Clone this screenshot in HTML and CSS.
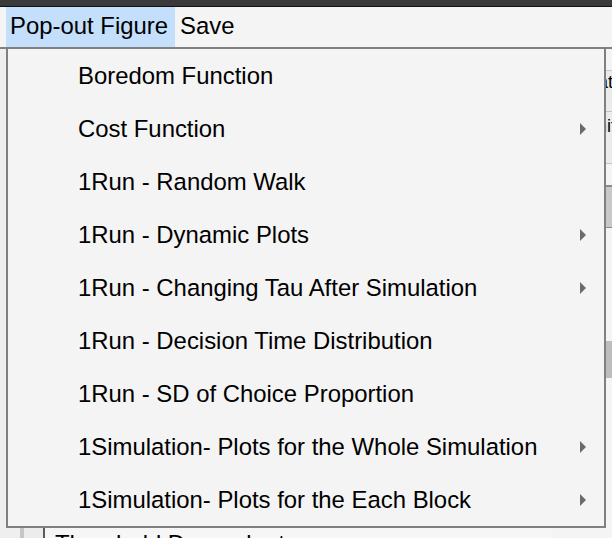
FILE: index.html
```html
<!DOCTYPE html>
<html>
<head>
<meta charset="utf-8">
<link rel="stylesheet" href="styles.css">
</head>
<body>
<div class="window">
  <div class="titlebar"></div>
  <nav class="menubar">
    <div class="menu-title active">Pop-out Figure</div>
    <div class="menu-title">Save</div>
  </nav>
  <div class="workspace">
    <div class="rail"></div>
    <div class="scroll"></div>
    <div class="gutter"></div>
    <div class="divider"></div>
    <div class="content">
      <div class="main">
        <div class="label">Threshold Dependent</div>
      </div>
      <div class="params">
        <div class="p-head"></div>
        <div class="p-row r1">Stats</div>
        <div class="p-row r2">Uniform</div>
        <div class="p-gap1"></div>
        <div class="p-block b1"></div>
        <div class="p-gap2"></div>
        <div class="p-block b2"></div>
      </div>
    </div>
  </div>
  <div class="dropdown">
    <div class="item"><span>Boredom Function</span></div>
    <div class="item"><span>Cost Function</span><i class="arrow"></i></div>
    <div class="item"><span>1Run - Random Walk</span></div>
    <div class="item"><span>1Run - Dynamic Plots</span><i class="arrow"></i></div>
    <div class="item"><span>1Run - Changing Tau After Simulation</span><i class="arrow"></i></div>
    <div class="item"><span>1Run - Decision Time Distribution</span></div>
    <div class="item"><span>1Run - SD of Choice Proportion</span></div>
    <div class="item"><span>1Simulation- Plots for the Whole Simulation</span><i class="arrow"></i></div>
    <div class="item"><span>1Simulation- Plots for the Each Block</span><i class="arrow"></i></div>
  </div>
</div>
</body>
</html>
```
FILE: styles.css
```css
* { box-sizing: border-box; }
html, body { margin: 0; padding: 0; }
body {
  width: 612px;
  height: 538px;
  overflow: hidden;
  background: #ececec;
  font-family: "Liberation Sans", Arial, sans-serif;
  color: #000;
}
.window {
  position: relative;
  width: 612px;
  height: 538px;
  overflow: hidden;
  display: flex;
  flex-direction: column;
}
.titlebar {
  height: 7px;
  flex: none;
  background: #3a3a3a;
  border-bottom: 1px solid #111;
}
.menubar {
  height: 42px;
  flex: none;
  display: flex;
  background: #f4f4f4;
  border-bottom: 2px solid #808080;
  font-size: 23.9px;
  line-height: 38px;
  padding-left: 6px;
}
.menu-title {
  height: 40px;
  padding: 0 5px;
  white-space: nowrap;
}
.menu-title.active {
  background: #c3dffb;
  padding: 0 7px 0 4px;
}
.workspace {
  flex: 1;
  display: flex;
  min-height: 0;
}
.rail { width: 20px; background: #efefef; }
.scroll { width: 4px; background: #c6c6c6; }
.gutter { width: 19px; background: #ececec; }
.divider { width: 2px; background: #5a5a5a; }
.content {
  flex: 1;
  display: flex;
  background: #f6f6f6;
}
.main {
  flex: 1;
  padding: 480px 0 0 10px;
}
.label {
  font-size: 23.9px;
  line-height: 30px;
  white-space: nowrap;
}
.params {
  width: 60px;
  display: flex;
  flex-direction: column;
  background: #f4f4f4;
  font-size: 18px;
  line-height: 22px;
  white-space: nowrap;
  overflow: hidden;
}
.p-head { height: 22px; border-bottom: 1px solid #c8c8c8; }
.p-row { background: #ebebeb; border-bottom: 1px solid #c4c4c4; }
.r1 { height: 41px; padding-left: 29px; }
.r2 { height: 52px; padding: 3px 0 0 32px; }
.p-gap1 { height: 21px; }
.p-block { background: #c8c8c8; }
.b1 { height: 43px; border-top: 2px solid #8a8a8a; border-bottom: 1px solid #8a8a8a; }
.p-gap2 { height: 113px; }
.b2 { height: 37px; background: #bdbdbd; }

.dropdown {
  position: absolute;
  top: 49px;
  left: 6px;
  width: 600px;
  height: 479px;
  background: #f4f4f4;
  border: 2px solid #808080;
  border-top: none;
  display: flex;
  flex-direction: column;
  font-size: 23.9px;
  line-height: 30px;
}
.item {
  height: 53px;
  display: flex;
  align-items: center;
  justify-content: space-between;
  padding: 1px 18px 0 70px;
  white-space: nowrap;
}
.arrow {
  width: 0;
  height: 0;
  border-left: 6px solid #6b6b6b;
  border-top: 6px solid transparent;
  border-bottom: 6px solid transparent;
}
```
